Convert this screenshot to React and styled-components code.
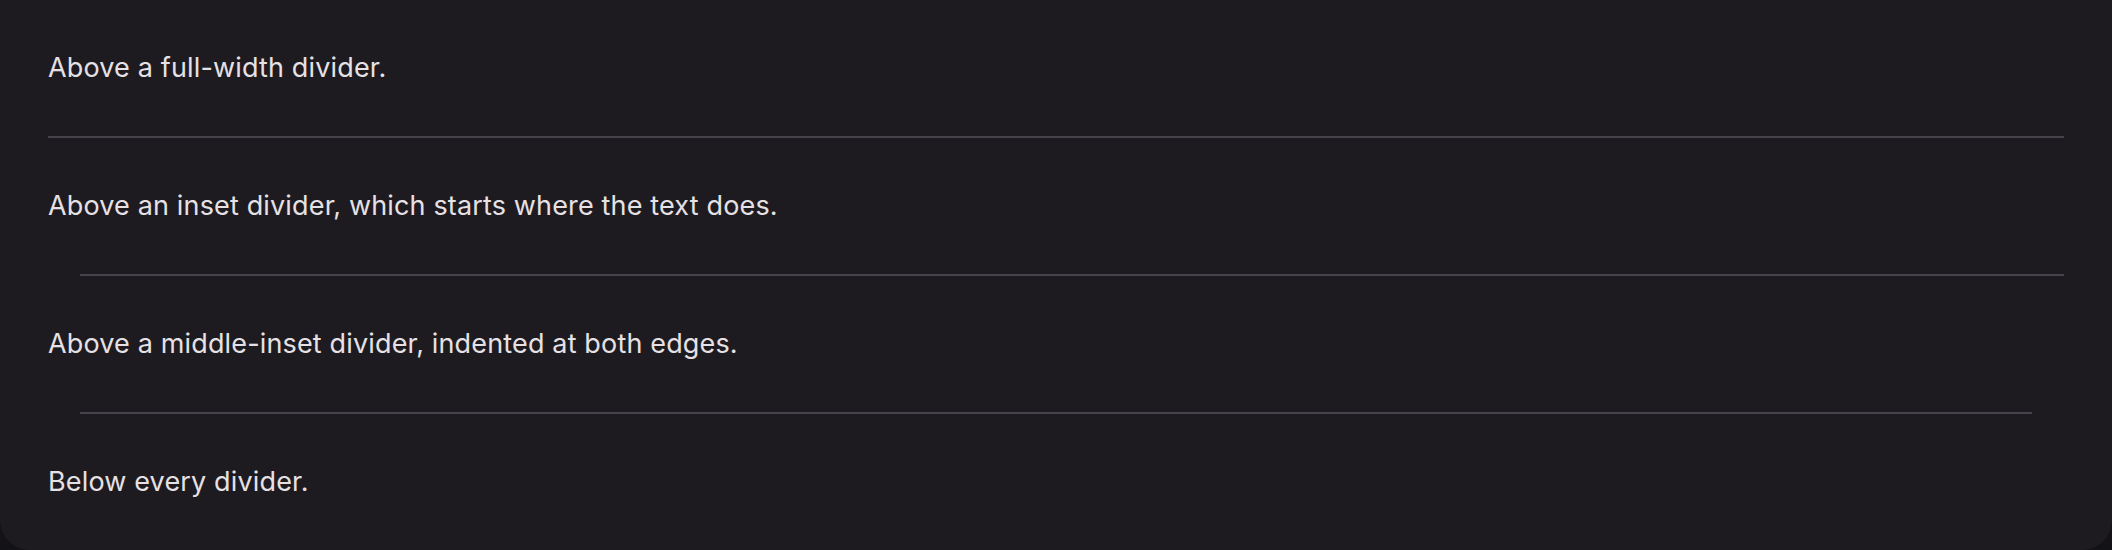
import React from "react";
import styled, { createGlobalStyle } from "styled-components";

const Global = createGlobalStyle`
  html, body { margin: 0; padding: 0; background: #131216; overflow: hidden; }
  body { font-family: Inter, "Noto Sans", sans-serif; }
`;

const Card = styled.section`
  box-sizing: border-box;
  width: 2112px;
  height: 550px;
  background: #1d1b20;
  border-radius: 0 0 30px 30px;
  padding: 47px 48px;
  display: flex;
  flex-direction: column;
`;

const Text = styled.p`
  margin: 0;
  font-size: 27px;
  line-height: 42px;
  letter-spacing: 0.15px;
  color: #e6e1e5;
`;

const Divider = styled.div`
  height: 2px;
  background: #46434b;
  margin: 47px ${(p) => (p.$variant === "middle" ? "32px" : "0")} 47px
    ${(p) => (p.$variant === "full" ? "0" : "32px")};
  flex: none;
`;

export default function App() {
  return (
    <>
      <Global />
      <Card>
        <Text>Above a full-width divider.</Text>
        <Divider $variant="full" role="separator" />
        <Text>Above an inset divider, which starts where the text does.</Text>
        <Divider $variant="inset" role="separator" />
        <Text>Above a middle-inset divider, indented at both edges.</Text>
        <Divider $variant="middle" role="separator" />
        <Text>Below every divider.</Text>
      </Card>
    </>
  );
}
